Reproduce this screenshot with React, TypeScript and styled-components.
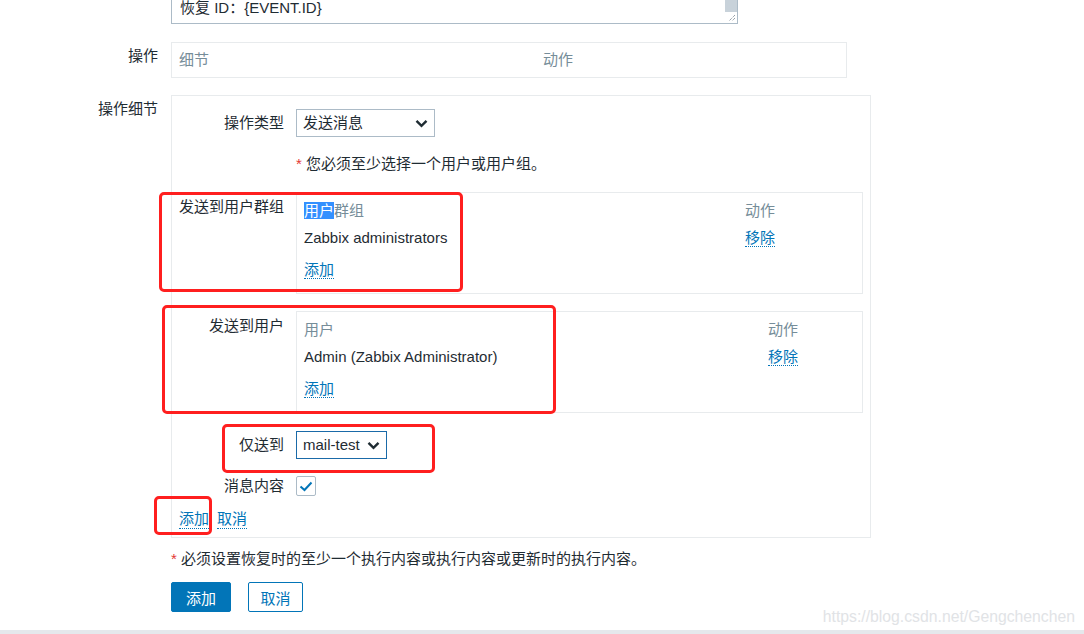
import React from 'react';
import styled, { createGlobalStyle } from 'styled-components';

const GlobalStyle = createGlobalStyle`
  html, body { margin: 0; padding: 0; background: #ffffff; }
  body {
    font-family: "Liberation Sans", Arial, "Noto Sans CJK SC", sans-serif;
    font-size: 15px;
    color: #1f2c33;
  }
  * { box-sizing: border-box; }
`;

const Screen = styled.div`
  position: relative;
  height: 634px;
  display: flex;
  flex-direction: column;
  overflow: hidden;
`;

const Main = styled.div`
  flex: 1;
  display: flex;
  flex-direction: column;
`;

const Footer = styled.div`
  height: 4px;
  background: #e5e8ec;
`;

const FormRow = styled.div<{ $mt?: number }>`
  display: grid;
  grid-template-columns: 158px auto;
  column-gap: 13px;
  margin-top: ${(p) => p.$mt ?? 0}px;
  align-items: start;
`;

const FormLabel = styled.div`
  text-align: right;
  line-height: 18px;
  padding-top: 5px;
  white-space: nowrap;
`;

const TextArea = styled.div`
  position: relative;
  width: 567px;
  height: 24px;
  border: 1px solid #acbbc7;
  border-top: none;
  padding: 0 8px;
  line-height: 16px;
`;

const ScrollThumb = styled.div`
  position: absolute;
  top: 0;
  right: 0;
  width: 12px;
  height: 12px;
  background: #c8d2da;
`;

const Grip = styled.svg`
  position: absolute;
  right: 1px;
  bottom: 1px;
`;

const OpsBox = styled.div`
  width: 676px;
  height: 36px;
  border: 1px solid #e8ebed;
  display: grid;
  grid-template-columns: 364px auto;
  padding: 0 7px;
  line-height: 34px;
  color: #768d99;
`;

const DetailsBox = styled.div`
  width: 700px;
  border: 1px solid #e8ebed;
  padding: 13px 7px 8px 0;
  display: flex;
  flex-direction: column;
`;

const InnerRow = styled.div<{ $mt?: number; $center?: boolean }>`
  display: grid;
  grid-template-columns: 112px auto;
  column-gap: 12px;
  margin-top: ${(p) => p.$mt ?? 0}px;
  align-items: ${(p) => (p.$center ? 'center' : 'start')};
`;

const InnerLabel = styled.div<{ $pt?: number }>`
  text-align: right;
  line-height: 18px;
  padding-top: ${(p) => p.$pt ?? 0}px;
  white-space: nowrap;
`;

const Select = styled.div<{ $w: number; $focus?: boolean }>`
  width: ${(p) => p.$w}px;
  height: 28px;
  border: 1px solid ${(p) => (p.$focus ? '#1a6aa8' : '#acbbc7')};
  display: flex;
  align-items: center;
  justify-content: space-between;
  padding: 0 6px 0 6px;
  line-height: 18px;
`;

const Note = styled.div`
  line-height: 18px;
`;

const Star = styled.span`
  color: #e33734;
`;

const ListTable = styled.div<{ $nameW: number }>`
  width: 567px;
  height: 102px;
  border: 1px solid #e8ebed;
  padding: 3px 8px 0 7px;
  display: grid;
  grid-template-columns: ${(p) => p.$nameW}px auto;
  grid-template-rows: 28px 28px 28px;
  align-items: center;
  line-height: 18px;
`;

const HeadCell = styled.div`
  color: #768d99;
  padding-top: 1px;
`;

const Picked = styled.span`
  background: #3390ff;
  color: #ffffff;
`;

const AddCell = styled.div`
  padding-top: 8px;
`;

const Link = styled.a`
  color: #0275b8;
  text-decoration: none;
  border-bottom: 1px dotted #0275b8;
  cursor: pointer;
  line-height: 18px;
`;

const Check = styled.div`
  width: 20px;
  height: 20px;
  border: 1px solid #acbbc7;
  border-radius: 2px;
  display: flex;
  align-items: center;
  justify-content: center;
`;

const LinkBar = styled.div`
  display: flex;
  gap: 8px;
  padding-left: 7px;
  margin-top: 14px;
  line-height: 18px;
`;

const FooterNote = styled.div`
  margin: 12px 0 0 171px;
  line-height: 18px;
`;

const ButtonBar = styled.div`
  display: flex;
  gap: 17px;
  margin: 14px 0 0 171px;
`;

const Button = styled.button<{ $primary?: boolean; $w: number }>`
  width: ${(p) => p.$w}px;
  height: 30px;
  font: inherit;
  border-radius: 2px;
  border: 1px solid #0275b8;
  background: ${(p) => (p.$primary ? '#0275b8' : '#ffffff')};
  color: ${(p) => (p.$primary ? '#ffffff' : '#0275b8')};
  padding: 0;
  cursor: pointer;
`;

const Mark = styled.div`
  position: absolute;
  border: 3px solid #ff1f1f;
  border-radius: 5px;
  pointer-events: none;
`;

const Watermark = styled.div`
  position: absolute;
  right: 9px;
  bottom: 8px;
  color: #e1e3e6;
  font-size: 15.75px;
  line-height: 18px;
`;

const Chevron = () => (
  <svg width="13" height="9" viewBox="0 0 13 9">
    <path d="M1.5 1.8 L6.5 6.8 L11.5 1.8" fill="none" stroke="#1f2c33" strokeWidth="2.4" />
  </svg>
);

const marks = [
  { left: 159, top: 192, width: 304, height: 100 },
  { left: 162, top: 305, width: 394, height: 109 },
  { left: 222, top: 424, width: 213, height: 49 },
  { left: 154, top: 496, width: 58, height: 39 },
];

export default function App() {
  return (
    <Screen>
      <GlobalStyle />
      <Main>
        <FormRow>
          <div />
          <TextArea>
            恢复 ID：{'{EVENT.ID}'}
            <ScrollThumb />
            <Grip width="9" height="9" viewBox="0 0 9 9">
              <path d="M8 2 L2 8 M8 5 L5 8" stroke="#6d7a85" strokeWidth="1" strokeDasharray="1 1" />
            </Grip>
          </TextArea>
        </FormRow>

        <FormRow $mt={18}>
          <FormLabel>操作</FormLabel>
          <OpsBox>
            <span>细节</span>
            <span>动作</span>
          </OpsBox>
        </FormRow>

        <FormRow $mt={17}>
          <FormLabel>操作细节</FormLabel>
          <DetailsBox>
            <InnerRow $center>
              <InnerLabel>操作类型</InnerLabel>
              <Select $w={139}>
                <span>发送消息</span>
                <Chevron />
              </Select>
            </InnerRow>

            <InnerRow $mt={18}>
              <div />
              <Note>
                <Star>*</Star> 您必须至少选择一个用户或用户组。
              </Note>
            </InnerRow>

            <InnerRow $mt={19}>
              <InnerLabel $pt={6}>发送到用户群组</InnerLabel>
              <ListTable $nameW={441}>
                <HeadCell>
                  <Picked>用户</Picked>群组
                </HeadCell>
                <HeadCell>动作</HeadCell>
                <div>Zabbix administrators</div>
                <div>
                  <Link>移除</Link>
                </div>
                <AddCell>
                  <Link>添加</Link>
                </AddCell>
              </ListTable>
            </InnerRow>

            <InnerRow $mt={17}>
              <InnerLabel $pt={6}>发送到用户</InnerLabel>
              <ListTable $nameW={464}>
                <HeadCell>用户</HeadCell>
                <HeadCell>动作</HeadCell>
                <div>Admin (Zabbix Administrator)</div>
                <div>
                  <Link>移除</Link>
                </div>
                <AddCell>
                  <Link>添加</Link>
                </AddCell>
              </ListTable>
            </InnerRow>

            <InnerRow $mt={18} $center>
              <InnerLabel>仅送到</InnerLabel>
              <Select $w={91} $focus>
                <span>mail-test</span>
                <Chevron />
              </Select>
            </InnerRow>

            <InnerRow $mt={17} $center>
              <InnerLabel>消息内容</InnerLabel>
              <Check>
                <svg width="14" height="11" viewBox="0 0 14 11">
                  <path d="M1.5 5.5 L5.5 9 L12.5 1.5" fill="none" stroke="#0275b8" strokeWidth="2" />
                </svg>
              </Check>
            </InnerRow>

            <LinkBar>
              <Link>添加</Link>
              <Link>取消</Link>
            </LinkBar>
          </DetailsBox>
        </FormRow>

        <FooterNote>
          <Star>*</Star> 必须设置恢复时的至少一个执行内容或执行内容或更新时的执行内容。
        </FooterNote>

        <ButtonBar>
          <Button $primary $w={60}>添加</Button>
          <Button $w={55}>取消</Button>
        </ButtonBar>
      </Main>
      <Footer />
      {marks.map((m, i) => (
        <Mark key={i} style={{ left: m.left, top: m.top, width: m.width, height: m.height }} />
      ))}
      <Watermark>https://blog.csdn.net/Gengchenchen</Watermark>
    </Screen>
  );
}
